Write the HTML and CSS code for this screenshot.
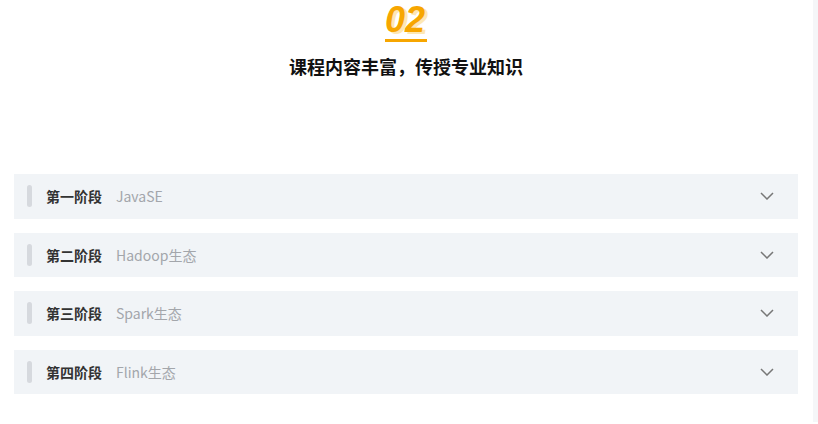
FILE: index.html
```html
<html>
<head>
<meta charset="utf-8">
<title>课程内容</title>
<link rel="stylesheet" href="styles.css">
</head>
<body>
<div id="page">
  <div id="head">
    <div class="num">02</div>
    <div class="title">课程内容丰富，传授专业知识</div>
  </div>
  <div id="stages">
    <div class="stage"><span class="bar"></span><b>第一阶段</b><span class="name">JavaSE</span>
      <svg class="arrow" width="14" height="8" viewBox="0 0 14 8"><path d="M1 1 L7 7 L13 1" fill="none" stroke="#777" stroke-width="1.5"/></svg></div>
    <div class="stage"><span class="bar"></span><b>第二阶段</b><span class="name">Hadoop生态</span>
      <svg class="arrow" width="14" height="8" viewBox="0 0 14 8"><path d="M1 1 L7 7 L13 1" fill="none" stroke="#777" stroke-width="1.5"/></svg></div>
    <div class="stage"><span class="bar"></span><b>第三阶段</b><span class="name">Spark生态</span>
      <svg class="arrow" width="14" height="8" viewBox="0 0 14 8"><path d="M1 1 L7 7 L13 1" fill="none" stroke="#777" stroke-width="1.5"/></svg></div>
    <div class="stage"><span class="bar"></span><b>第四阶段</b><span class="name">Flink生态</span>
      <svg class="arrow" width="14" height="8" viewBox="0 0 14 8"><path d="M1 1 L7 7 L13 1" fill="none" stroke="#777" stroke-width="1.5"/></svg></div>
  </div>
</div>
<div id="track"></div>
</body>
</html>
```
FILE: styles.css
```css
html, body {
  margin: 0;
  padding: 0;
}
body {
  background: #fff;
  font-family: "Noto Sans CJK SC", "Noto Sans", sans-serif;
  display: flex;
  height: 424px;
  overflow: hidden;
}
#page {
  width: 813px;
  padding: 0 15px 0 14px;
  box-sizing: border-box;
}
#track {
  width: 5px;
  height: 422px;
  background: #f5f6f8;
}
#head {
  display: flex;
  flex-direction: column;
  align-items: center;
}
.num {
  font-family: "Liberation Sans", Arial, sans-serif;
  font-size: 36px;
  font-weight: 700;
  font-style: italic;
  color: #f7a600;
  line-height: 39px;
  text-shadow: 3px 2px 0 #fde8b4;
  border-bottom: 3px solid #f7a600;
  padding: 0 2px 0 0;
}
.title {
  margin-top: 11px;
  font-size: 18px;
  font-weight: 700;
  color: #111;
  line-height: 26px;
}
#stages {
  margin-top: 95px;
  display: flex;
  flex-direction: column;
  gap: 14px;
}
.stage {
  height: 44.5px;
  background: #f1f4f7;
  display: flex;
  align-items: center;
  padding: 0 24px 0 13px;
  font-size: 14px;
}
.bar {
  width: 5px;
  height: 22px;
  border-radius: 3px;
  background: #d6d9de;
  margin-right: 14px;
}
.stage b {
  color: #333;
  font-weight: 700;
  margin-right: 14px;
}
.name {
  color: #a3a6ab;
  flex: 1;
}
.arrow {
  display: block;
}
```
